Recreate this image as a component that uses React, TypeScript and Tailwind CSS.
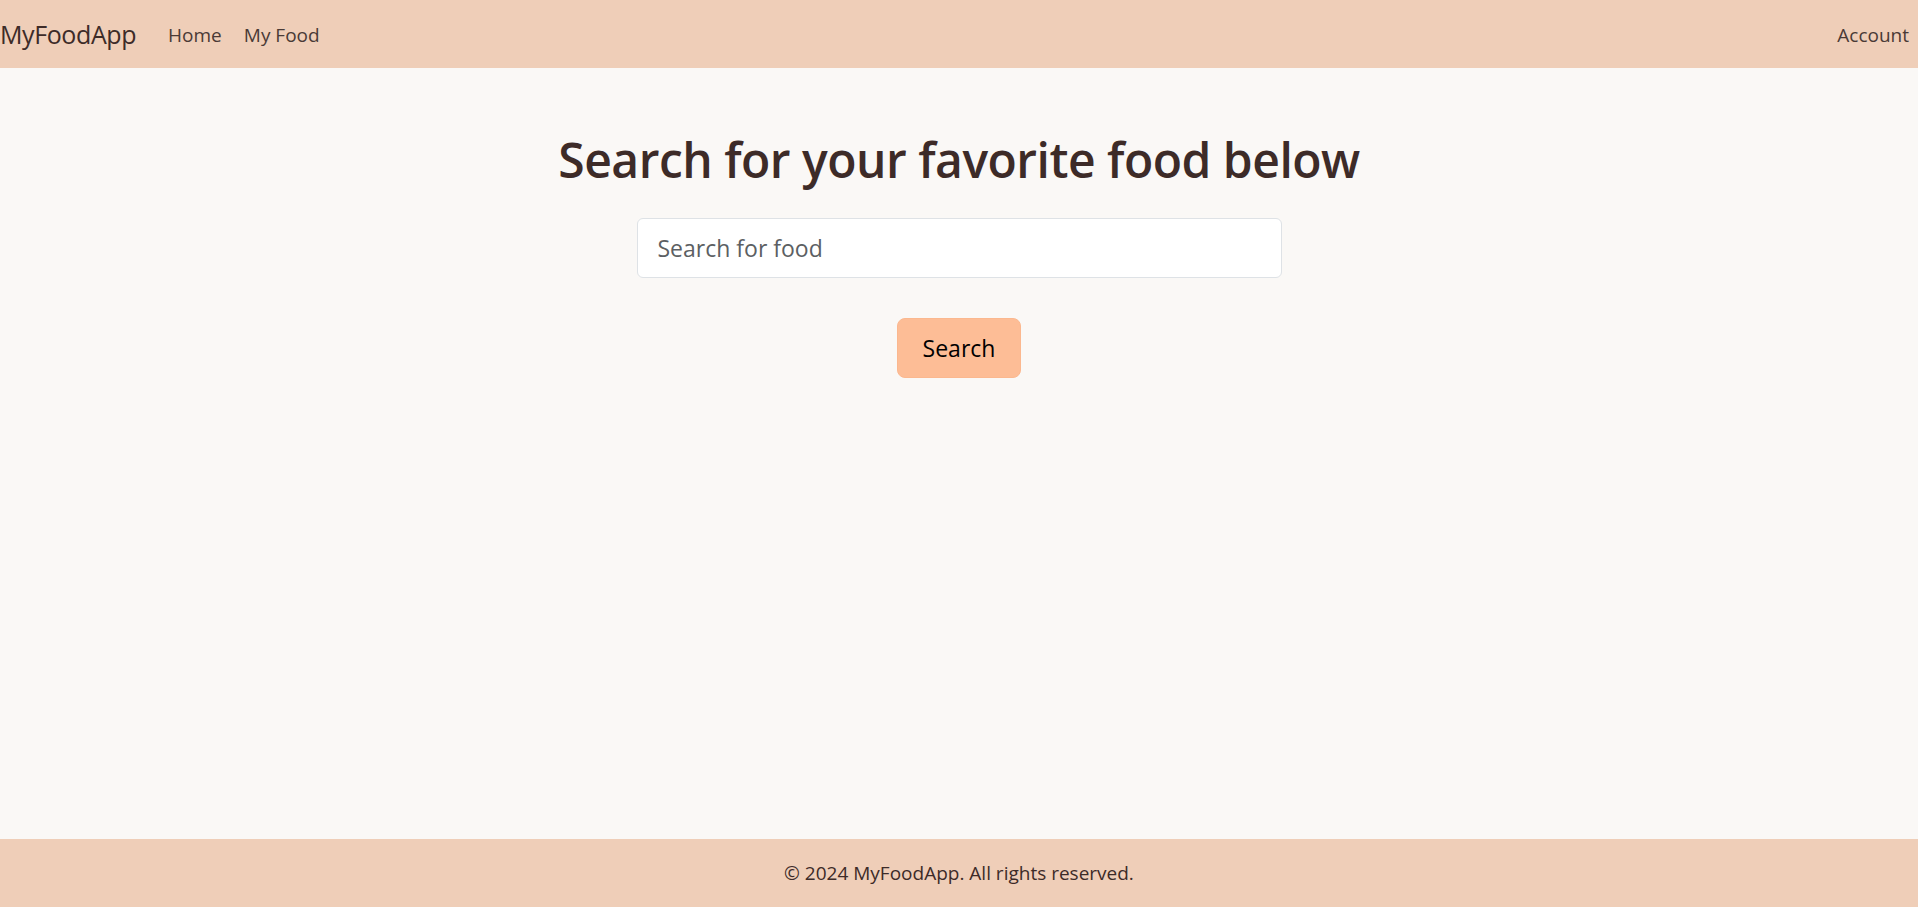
import React from "react";

export default function App() {
  return (
    <div
      className="min-h-screen flex flex-col bg-[#faf8f6] text-[#3d2b28]"
      style={{ fontFamily: '"Open Sans", "Noto Sans", sans-serif' }}
    >
      <nav className="h-[68px] flex items-center bg-[#efceb8] pr-[9px] pt-[2px]">
        <a className="text-[25px] text-[#3d2b28] tracking-[-0.4px]" href="#">MyFoodApp</a>
        <div className="flex items-center ml-[32px] gap-[22px] text-[19px] text-[#4a3a36]">
          <a href="#">Home</a>
          <a href="#">My Food</a>
        </div>
        <div className="ml-auto text-[19px] text-[#4a3a36]">
          <a href="#">Account</a>
        </div>
      </nav>
      <main className="flex-1 flex flex-col items-center pt-[63px]">
        <h1 className="text-[48px] font-semibold leading-[58px] text-[#3d2b28] tracking-[-0.5px]">
          Search for your favorite food below
        </h1>
        <input
          className="mt-[29px] w-[645px] h-[60px] bg-white border border-[#dee2e6] rounded-[6px] px-[20px] text-[23px] text-[#3d2b28] placeholder:text-[#5c5f63] outline-none"
          placeholder="Search for food"
        />
        <button className="mt-[40px] h-[60px] px-[25px] rounded-[8px] bg-[#fdbd96] border border-[#fbb88f] text-[23px] text-black">
          Search
        </button>
      </main>
      <footer className="h-[68px] flex items-center justify-center bg-[#efceb8] text-[19px] text-[#3d2b28]">
        © 2024 MyFoodApp. All rights reserved.
      </footer>
    </div>
  );
}
